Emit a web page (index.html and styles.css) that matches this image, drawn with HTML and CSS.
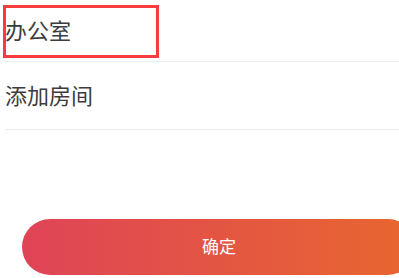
FILE: index.html
```html
<!DOCTYPE html>
<html>
<head>
    <meta charset="utf-8">
    <link rel="stylesheet" href="styles.css">
</head>
<body>

    <div class="room_list">
        <div class="room_row first_row">
            <span class="room_name">办公室</span>
            <div class="highlight_box"></div>
        </div>
        <div class="room_row">
            <span class="room_name">添加房间</span>
        </div>
    </div>

    <div class="button_area">
        <button class="confirm_button">确定</button>
    </div>

</body>
</html>
```

FILE: styles.css
```css
/*Page setup.*/
html, body {
    margin: 0;
    padding: 0;
    background-color: #ffffff;
    overflow: hidden;
    font-family: "Noto Sans CJK SC", "Noto Sans", sans-serif;
}

/*Room list.*/
.room_list {
    margin-left: 5px;
}

.room_row {
    position: relative;
    display: flex;
    align-items: center;
    height: 64px;
    padding-bottom: 3px;
    border-bottom: 1px solid #ececec;
}

.first_row {
    height: 57px;
    padding-bottom: 4px;
}

.room_name {
    font-size: 22px;
    color: #3c3c3c;
    line-height: 1;
}

/*Red highlight drawn over the first row.*/
.highlight_box {
    position: absolute;
    left: -2px;
    top: 5px;
    width: 150px;
    height: 47px;
    border: 3px solid #f73c3f;
}

/*Confirm button.*/
.button_area {
    margin-top: 89px;
    padding-left: 22px;
}

.confirm_button {
    display: block;
    width: 394px;
    height: 56px;
    border: none;
    border-radius: 28px;
    background: linear-gradient(to right, #df4457, #e8672f);
    color: #ffffff;
    font-family: "Noto Sans CJK SC", "Noto Sans", sans-serif;
    font-size: 17px;
    padding: 0 0 3px 0;
}
```
